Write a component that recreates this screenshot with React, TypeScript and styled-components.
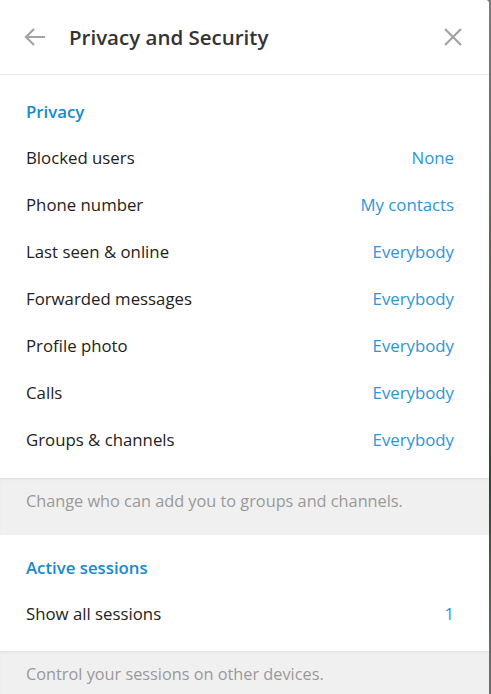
import styled, { createGlobalStyle } from "styled-components";

const GlobalStyle = createGlobalStyle`
  html, body {
    margin: 0;
    padding: 0;
    height: 100%;
  }
  body {
    background: linear-gradient(#7b7b7b 0%, #5b615b 40%, #2f4634 70%, #6c6c6c 95%);
    font-family: "Open Sans", "Noto Sans", sans-serif;
    overflow: hidden;
  }
`;

const Panel = styled.div`
  width: 489px;
  height: 694px;
  background: #f0f0f0;
  border-top-right-radius: 4px;
  overflow: hidden;
`;

const Header = styled.div`
  display: flex;
  align-items: center;
  height: 74px;
  padding: 0 23px 0 22px;
  background: #ffffff;
  border-bottom: 1px solid #e7e7e7;
`;

const IconButton = styled.button`
  display: flex;
  align-items: center;
  justify-content: center;
  width: 26px;
  height: 26px;
  padding: 0;
  border: none;
  background: none;
  color: #a3a3a3;
  cursor: pointer;
`;

const Title = styled.h1`
  flex: 1;
  margin: 0 0 0 21px;
  font-size: 20.5px;
  font-weight: 600;
  color: #333333;
`;

const Section = styled.div<{ top: number; bottom: number }>`
  padding: ${({ top }) => top}px 0 ${({ bottom }) => bottom}px;
  background: #ffffff;
`;

const SectionTitle = styled.div`
  height: 46px;
  display: flex;
  align-items: center;
  padding: 0 26px;
  font-size: 16.8px;
  font-weight: 600;
  color: #168acd;
`;

const Row = styled.div`
  height: 47px;
  display: flex;
  align-items: center;
  justify-content: space-between;
  padding: 0 35px 0 26px;
  font-size: 16.8px;
  color: #222222;
  cursor: pointer;
`;

const Value = styled.span`
  color: #2b96d8;
`;

const Note = styled.div<{ bottom: number }>`
  background: #f0f0f0;
  box-shadow: inset 0 1px 0 #e3e3e3, inset 0 2px 2px rgba(0, 0, 0, 0.03);
  padding: 12px 26px ${({ bottom }) => bottom}px;
  font-size: 16.3px;
  line-height: 22px;
  color: #999999;
`;

const privacyRows = [
  { label: "Blocked users", value: "None" },
  { label: "Phone number", value: "My contacts" },
  { label: "Last seen & online", value: "Everybody" },
  { label: "Forwarded messages", value: "Everybody" },
  { label: "Profile photo", value: "Everybody" },
  { label: "Calls", value: "Everybody" },
  { label: "Groups & channels", value: "Everybody" },
];

const App = () => {
  return (
    <>
      <GlobalStyle />
      <Panel>
        <Header>
          <IconButton aria-label="Back">
            <svg width="24" height="24" viewBox="0 0 24 24" fill="none">
              <path
                d="M22 12H3M11 4L3 12L11 20"
                stroke="currentColor"
                strokeWidth="2.2"
              />
            </svg>
          </IconButton>
          <Title>Privacy and Security</Title>
          <IconButton aria-label="Close">
            <svg width="20" height="20" viewBox="0 0 20 20" fill="none">
              <path
                d="M2 2L18 18M18 2L2 18"
                stroke="currentColor"
                strokeWidth="2.2"
              />
            </svg>
          </IconButton>
        </Header>

        <Section top={13} bottom={15}>
          <SectionTitle>Privacy</SectionTitle>
          {privacyRows.map((row) => (
            <Row key={row.label}>
              <span>{row.label}</span>
              <Value>{row.value}</Value>
            </Row>
          ))}
        </Section>
        <Note bottom={23}>Change who can add you to groups and channels.</Note>

        <Section top={9} bottom={14}>
          <SectionTitle>Active sessions</SectionTitle>
          <Row>
            <span>Show all sessions</span>
            <Value>1</Value>
          </Row>
        </Section>
        <Note bottom={40}>Control your sessions on other devices.</Note>
      </Panel>
    </>
  );
};

export default App;
